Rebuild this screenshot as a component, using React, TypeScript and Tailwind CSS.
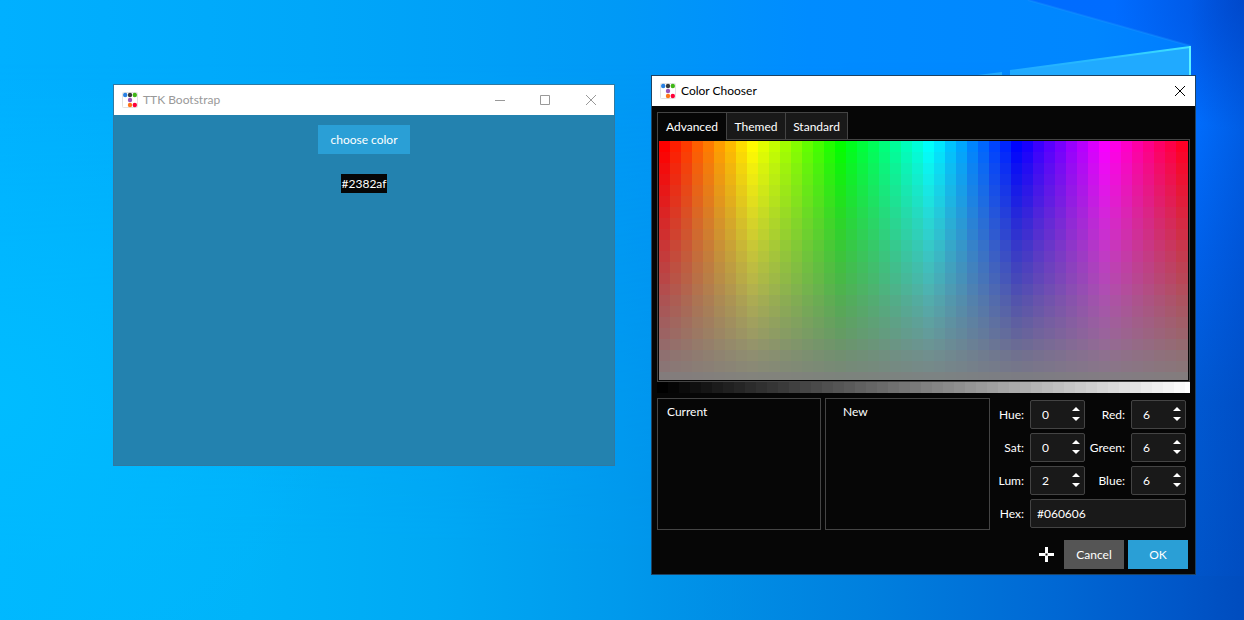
import type { ReactNode } from 'react';

const COLS = 48;
const ROWS = 22;

function Wallpaper() {
  return (
    <svg className="absolute inset-0 h-full w-full" viewBox="0 0 1244 620" preserveAspectRatio="none" aria-hidden="true">
      <defs>
        <linearGradient id="sky">
          <stop offset="0" stopColor="#00b0ff" />
          <stop offset="0.25" stopColor="#00a7f9" />
          <stop offset="0.5" stopColor="#0099f6" />
          <stop offset="0.65" stopColor="#008cff" />
          <stop offset="0.88" stopColor="#0086ff" />
          <stop offset="1" stopColor="#0078ff" />
        </linearGradient>
        <linearGradient id="floor">
          <stop offset="0" stopColor="#00b8ff" />
          <stop offset="0.2" stopColor="#00b3f9" />
          <stop offset="0.35" stopColor="#00a9f4" />
          <stop offset="0.5" stopColor="#0099ec" />
          <stop offset="0.65" stopColor="#0084e0" />
          <stop offset="0.8" stopColor="#006cd6" />
          <stop offset="1" stopColor="#004cc0" />
        </linearGradient>
        <linearGradient id="fade" x2="0" y2="1">
          <stop offset="0.1" stopColor="#000" />
          <stop offset="0.9" stopColor="#fff" />
        </linearGradient>
        <mask id="lower">
          <rect width="1244" height="620" fill="url(#fade)" />
        </mask>
        <radialGradient id="glow" cx="0" cy="400" r="330" gradientUnits="userSpaceOnUse">
          <stop offset="0" stopColor="#00bcff" />
          <stop offset="1" stopColor="#00b8ff" stopOpacity="0" />
        </radialGradient>
        <linearGradient id="side" gradientUnits="userSpaceOnUse" x1="0" y1="0" x2="0" y2="620">
          <stop offset="0" stopColor="#006cff" />
          <stop offset="0.2" stopColor="#006eff" />
          <stop offset="0.4" stopColor="#0062ec" />
          <stop offset="0.65" stopColor="#0059d2" />
          <stop offset="1" stopColor="#0055c8" />
        </linearGradient>
        <radialGradient id="corner" cx="1244" cy="0" r="130" gradientUnits="userSpaceOnUse">
          <stop offset="0" stopColor="#0048d0" stopOpacity="0.8" />
          <stop offset="1" stopColor="#0048d0" stopOpacity="0" />
        </radialGradient>
        <linearGradient id="shade">
          <stop offset="0" stopColor="#003cb0" stopOpacity="0" />
          <stop offset="1" stopColor="#003cb0" stopOpacity="0.35" />
        </linearGradient>
        <linearGradient id="edge">
          <stop offset="0" stopColor="#20aaff" />
          <stop offset="0.5" stopColor="#28bcff" />
          <stop offset="1" stopColor="#40e4ff" />
        </linearGradient>
      </defs>
      <rect width="1244" height="620" fill="url(#sky)" />
      <rect width="1244" height="620" fill="url(#floor)" mask="url(#lower)" />
      <rect width="1244" height="620" fill="url(#glow)" />
      <path d="M1028 0H1244V620H1191V46Z" fill="url(#side)" />
      <path d="M1028 0H1244V200H1191V46Z" fill="url(#corner)" />
      <rect x="1191" width="53" height="620" fill="url(#shade)" />
      <rect x="614" y="576" width="630" height="44" fill="url(#bottom)" />
      <path d="M1028 0L1191 46" stroke="#209cff" strokeOpacity="0.3" strokeWidth="2" />
      <path d="M1010 71L1190 47V90H1010Z" fill="#20aaff" />
      <path d="M970 76L1002 72V76Z" fill="#20aaff" />
      <path d="M1010 71L1190 47" stroke="url(#edge)" strokeWidth="2" />
      <path d="M1190 46V90" stroke="#5cf2ff" strokeWidth="2" />
      <defs>
        <linearGradient id="bottom">
          <stop offset="0" stopColor="#009aec" stopOpacity="0" />
          <stop offset="0.4" stopColor="#0080de" />
          <stop offset="0.7" stopColor="#0068d4" />
          <stop offset="0.9" stopColor="#0056c8" />
          <stop offset="1" stopColor="#004cbe" />
        </linearGradient>
      </defs>
    </svg>
  );
}

function AppIcon() {
  return (
    <svg className="size-4 shrink-0" viewBox="0 0 16 16" aria-hidden="true">
      <rect x="0.5" y="0.5" width="15" height="15" rx="1" fill="#fff" stroke="#e2e2e2" />
      <circle cx="3.2" cy="3" r="2.2" fill="#2780e3" />
      <circle cx="8" cy="3" r="2.2" fill="#373a3c" />
      <circle cx="12.8" cy="3" r="2.2" fill="#3fb618" />
      <circle cx="8" cy="8" r="2.2" fill="#9954bb" />
      <circle cx="8" cy="13" r="2.2" fill="#ff7518" />
      <circle cx="12.8" cy="13" r="2.2" fill="#ff0039" />
    </svg>
  );
}

function TitleBar({ title, children }: { title: string; children: ReactNode }) {
  return (
    <header className="flex h-[30px] items-center bg-white pl-2">
      <AppIcon />
      <h1 className="grow pl-[5px] text-[12px] leading-4">{title}</h1>
      {children}
    </header>
  );
}

function CaptionButton({ label, path }: { label: string; path: string }) {
  return (
    <button type="button" aria-label={label} className="flex h-[30px] w-[46px] items-center justify-center">
      <svg width="12" height="12" viewBox="0 0 12 12" fill="none" stroke="currentColor">
        <path d={path} />
      </svg>
    </button>
  );
}

const CLOSE = 'M1 1L11 11M11 1L1 11';

function BootstrapWindow() {
  return (
    <section className="absolute top-[84px] left-[113px] w-[502px] border border-[#3079a2] bg-[#2382af]">
      <div className="text-[#999]">
        <TitleBar title="TTK Bootstrap">
          <CaptionButton label="Minimize" path="M2 6.5H12" />
          <CaptionButton label="Maximize" path="M1.5 1.5H10.5V10.5H1.5Z" />
          <CaptionButton label="Close" path={CLOSE} />
        </TitleBar>
      </div>
      <div className="flex h-[350px] flex-col items-center gap-5 pt-[10px] text-white">
        <button type="button" className="h-[29px] bg-[#2a9fd6] px-3 text-[12px] leading-4">choose color</button>
        <output className="bg-[#060606] px-px text-[12px] leading-[19px]">#2382af</output>
      </div>
    </section>
  );
}

function Spectrum() {
  return (
    <svg className="block h-[239px] w-full" viewBox="0 0 529 239" preserveAspectRatio="none" shapeRendering="crispEdges" role="img" aria-label="Hue and saturation">
      {Array.from({ length: ROWS }, (_, r) =>
        Array.from({ length: COLS }, (_, c) => (
          <rect key={`${r}-${c}`} x={c * 11} y={r * 11} width="12" height="12" fill={`hsl(${Math.floor((c * 11 * 360) / 530)} ${Math.floor(100 - (r * 1100) / 240)}% 50%)`} />
        )),
      )}
    </svg>
  );
}

function LuminanceBar() {
  return (
    <svg className="block h-[11px] w-full" viewBox="0 0 533 11" preserveAspectRatio="none" shapeRendering="crispEdges" role="img" aria-label="Luminance">
      {Array.from({ length: 49 }, (_, i) => (
        <rect key={i} x={i * 11} width="11" height="11" fill={`hsl(0 0% ${(i * 100) / 48}%)`} />
      ))}
    </svg>
  );
}

function Spin({ label, value }: { label: string; value: string }) {
  const id = label.toLowerCase();
  return (
    <>
      <label htmlFor={id} className="pr-[6px] text-right">{label}:</label>
      <div className="flex h-[29px] items-center rounded-[2px] border border-[#444] bg-[#191919]">
        <input id={id} defaultValue={value} inputMode="numeric" className="w-full min-w-0 grow bg-transparent pl-[11px] outline-none" />
        <div className="flex flex-col gap-[6px] pr-1 pb-px">
          <button type="button" aria-label={`Increase ${label}`}>
            <svg className="block" width="8" height="4" viewBox="0 0 8 4" fill="#fff"><path d="M4 0L8 4H0Z" /></svg>
          </button>
          <button type="button" aria-label={`Decrease ${label}`}>
            <svg className="block" width="8" height="4" viewBox="0 0 8 4" fill="#fff"><path d="M4 4L8 0H0Z" /></svg>
          </button>
        </div>
      </div>
    </>
  );
}

function ColorChooser() {
  return (
    <section className="absolute top-[75px] left-[651px] w-[545px] border border-[#1d4263] bg-[#060606] text-[12px] leading-4 text-white">
      <div className="text-black">
        <TitleBar title="Color Chooser">
          <div className="-mr-2">
            <CaptionButton label="Close" path={CLOSE} />
          </div>
        </TitleBar>
      </div>
      <div className="h-[468px] px-[5px] pt-[6px]">
        <div role="tablist" className="flex">
          <button type="button" role="tab" aria-selected="true" className="z-10 -mb-px h-7 w-[70px] border border-b-0 border-[#444] bg-[#060606]">Advanced</button>
          <button type="button" role="tab" aria-selected="false" className="h-[27px] w-[59px] border border-b-0 border-l-0 border-[#444] bg-[#191919] pt-px">Themed</button>
          <button type="button" role="tab" aria-selected="false" className="h-[27px] w-[62px] border border-b-0 border-l-0 border-[#444] bg-[#191919] pt-px">Standard</button>
        </div>
        <div className="border border-[#444] p-px">
          <Spectrum />
        </div>
        <LuminanceBar />
        <div className="flex pt-[5px] pr-1">
          <div className="flex grow gap-1">
            <div className="h-[132px] w-[164px] border border-[#444] px-[9px] py-[5px]">Current</div>
            <div className="h-[132px] w-[165px] border border-[#444] px-[17px] py-[5px]">New</div>
          </div>
          <div className="grid shrink-0 grid-cols-[40px_55px_46px_55px] content-start items-center gap-y-1 pt-[2px]">
            <Spin label="Hue" value="0" />
            <Spin label="Red" value="6" />
            <Spin label="Sat" value="0" />
            <Spin label="Green" value="6" />
            <Spin label="Lum" value="2" />
            <Spin label="Blue" value="6" />
            <label htmlFor="hex" className="pr-[6px] text-right">Hex:</label>
            <input id="hex" defaultValue="#060606" className="col-span-3 h-[29px] w-full min-w-0 rounded-[2px] border border-[#444] bg-[#191919] px-[6px] outline-none" />
          </div>
        </div>
        <footer className="mt-[10px] mr-[2px] flex items-center justify-end gap-1">
          <button type="button" aria-label="Pick color from screen" className="mr-1 flex size-[18px] items-center justify-center">
            <svg width="16" height="16" viewBox="0 0 16 16" fill="#fff" fillRule="evenodd"><path d="M6 0H9V6H15V9H9V15H6V9H0V6H6ZM6.5 6.5V8.5H8.5V6.5Z" /></svg>
          </button>
          <button type="button" className="h-[29px] w-[60px] bg-[#555]">Cancel</button>
          <button type="button" className="h-[29px] w-[60px] bg-[#2a9fd6]">OK</button>
        </footer>
      </div>
    </section>
  );
}

export default function App() {
  return (
    <main className="relative h-screen min-h-[620px] w-full overflow-hidden bg-[#009cf7] font-['Lato',sans-serif]">
      <Wallpaper />
      <BootstrapWindow />
      <ColorChooser />
    </main>
  );
}
